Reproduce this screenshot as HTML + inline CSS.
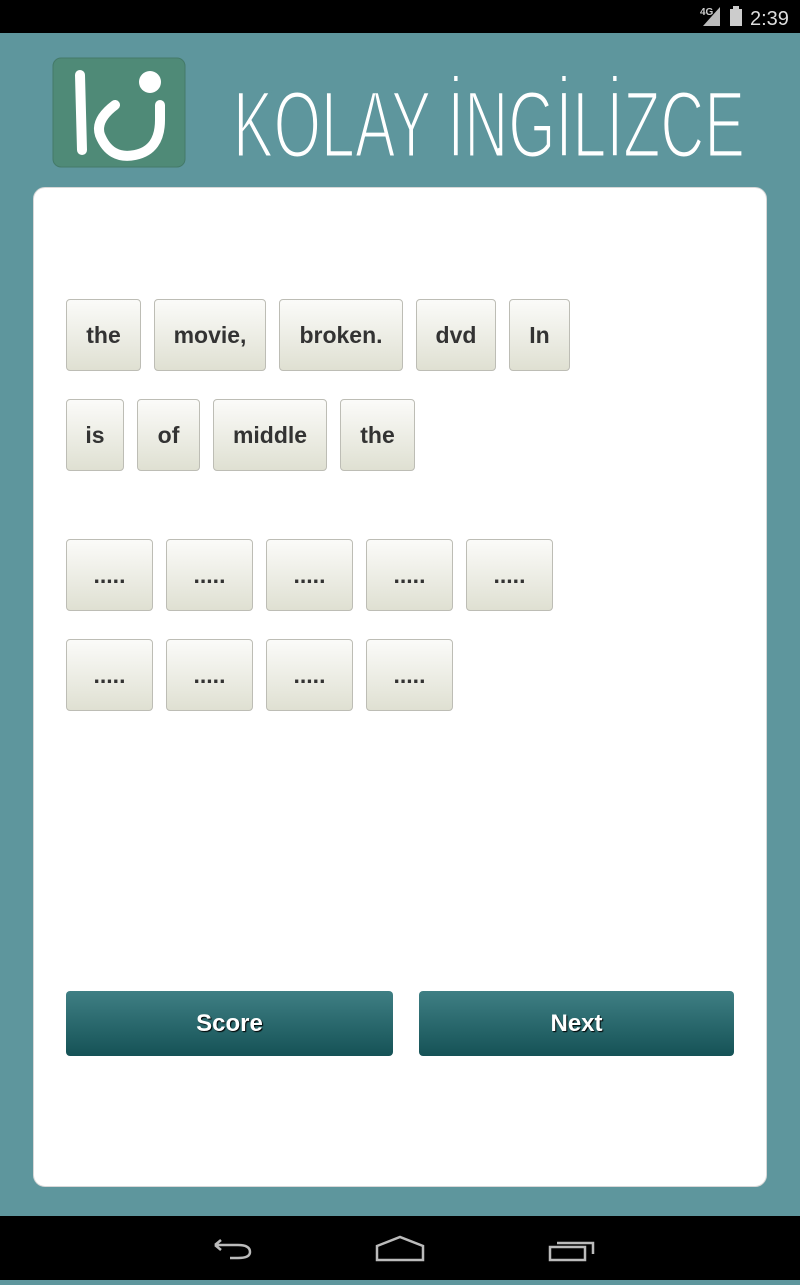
<!DOCTYPE html>
<html><head><meta charset="utf-8">
<style>
*{margin:0;padding:0;box-sizing:border-box}
body{width:800px;height:1280px;background:#5e969d;position:relative;overflow:hidden;font-family:"Liberation Sans",sans-serif}
#sb{position:absolute;left:0;top:0;width:800px;height:33px;background:#000}
#nav{position:absolute;left:0;top:1216px;width:800px;height:64px;background:#000}
#card{position:absolute;left:33px;top:187px;width:734px;height:1000px;background:#fff;border-radius:12px;border:1px solid #d8d8d8}
.t{position:absolute;height:72px;border:1px solid #bdbdb5;border-radius:4px;background:linear-gradient(#fbfbf9,#dfe0d2);color:#333;font-weight:bold;font-size:23px;display:flex;align-items:center;justify-content:center}
.b{position:absolute;top:991px;height:65px;border-radius:4px;background:linear-gradient(#3f7f84,#155256);color:#fff;font-weight:bold;font-size:24px;display:flex;align-items:center;justify-content:center;text-shadow:1px 1px 1px #000}
</style></head><body>
<div id="sb">
<svg width="800" height="33" style="position:absolute;left:0;top:0">
<text x="700" y="15" fill="#ccc" font-size="10" font-weight="bold" font-family="Liberation Sans">4G</text>
<polygon points="703,26 720,26 720,7" fill="#bbb"/>
<rect x="730" y="9" width="12" height="17" fill="#ccc"/><rect x="733" y="6" width="6" height="3" fill="#ccc"/>
<text x="750" y="25" fill="#ddd" font-size="20" font-family="Liberation Sans">2:39</text>
</svg></div>
<svg style="position:absolute;left:0;top:0" width="800" height="190">
<rect x="53" y="58" width="132" height="109" rx="8" fill="#4f8a77" stroke="#447a69"/>
<path d="M80 75 L82 150" stroke="#fff" stroke-width="10" stroke-linecap="round" fill="none"/>
<path d="M115 105 Q95 120 100 135 Q110 160 135 155 Q160 150 160 120 L160 105" stroke="#fff" stroke-width="10" stroke-linecap="round" fill="none"/>
<circle cx="150" cy="82" r="11" fill="#fff"/>
<text x="233" y="157" fill="#fff" font-size="95" font-family="Liberation Sans Narrow, Liberation Sans, sans-serif" textLength="512" lengthAdjust="spacingAndGlyphs" stroke="#5e969d" stroke-width="3">KOLAY İNGİLİZCE</text>
</svg>
<div id="card"></div>
<div class="t" style="left:66px;top:299px;width:75px">the</div>
<div class="t" style="left:154px;top:299px;width:112px">movie,</div>
<div class="t" style="left:279px;top:299px;width:124px">broken.</div>
<div class="t" style="left:416px;top:299px;width:80px">dvd</div>
<div class="t" style="left:509px;top:299px;width:61px">In</div>
<div class="t" style="left:66px;top:399px;width:58px">is</div>
<div class="t" style="left:137px;top:399px;width:63px">of</div>
<div class="t" style="left:213px;top:399px;width:114px">middle</div>
<div class="t" style="left:340px;top:399px;width:75px">the</div>
<div class="t" style="left:66px;top:539px;width:87px">.....</div>
<div class="t" style="left:166px;top:539px;width:87px">.....</div>
<div class="t" style="left:266px;top:539px;width:87px">.....</div>
<div class="t" style="left:366px;top:539px;width:87px">.....</div>
<div class="t" style="left:466px;top:539px;width:87px">.....</div>
<div class="t" style="left:66px;top:639px;width:87px">.....</div>
<div class="t" style="left:166px;top:639px;width:87px">.....</div>
<div class="t" style="left:266px;top:639px;width:87px">.....</div>
<div class="t" style="left:366px;top:639px;width:87px">.....</div>
<div class="b" style="left:66px;width:327px">Score</div>
<div class="b" style="left:419px;width:315px">Next</div>
<div id="nav">
<svg width="800" height="64">
<path d="M215 29 L238 29 Q250 29 250 36 Q250 42 238 42 L230 42 M215 29 L221 24 M215 29 L221 34" stroke="#bbb" stroke-width="2.5" fill="none"/>
<path d="M377 30 L400 21 L423 30 L423 44 L377 44 Z" stroke="#bbb" stroke-width="2.5" fill="none"/>
<rect x="550" y="31" width="35" height="13" stroke="#bbb" stroke-width="2.5" fill="none"/>
<path d="M557 27 L593 27 L593 38" stroke="#bbb" stroke-width="2.5" fill="none"/>
</svg></div>
</body></html>
